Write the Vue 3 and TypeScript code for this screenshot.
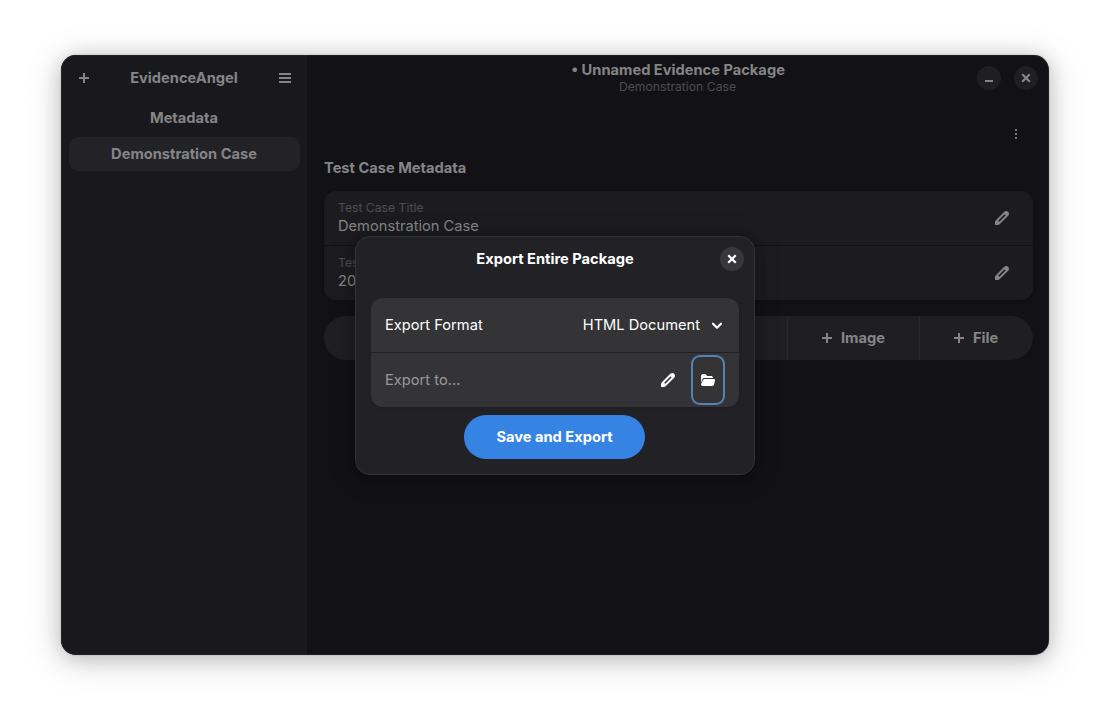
<script setup lang="ts">
interface Field {
  label: string
  value: string
}

const sections: string[] = ['Metadata', 'Demonstration Case']
const selected = 'Demonstration Case'
const fields: Field[] = [
  { label: 'Test Case Title', value: 'Demonstration Case' },
  { label: 'Test', value: '20' },
]
const evidenceActions: string[] = ['Image', 'File']
</script>

<template>
  <div class="desktop">
    <svg width="0" height="0" class="defs" aria-hidden="true">
      <symbol id="pencil" viewBox="0 0 16 16">
        <path
          fill-rule="evenodd"
          d="M12.300 1C13.700 1 15 2.300 15 3.700C15 4.600 14.700 5.200 14.200 5.700L5.800 14.100C5.200 14.700 4.600 15 3.900 15H1V12.100C1 11.400 1.300 10.800 1.900 10.200L10.300 1.800C10.800 1.300 11.400 1 12.300 1ZM10.200 4.700L4.600 10.300C3.900 11 5 12.100 5.700 11.400L11.300 5.800C12 5.100 10.900 4 10.200 4.700Z"
        />
      </symbol>
      <symbol id="plus" viewBox="0 0 16 16">
        <path d="M7 3h2v4h4v2H9v4H7V9H3V7h4z" />
      </symbol>
      <symbol id="cross" viewBox="0 0 16 16">
        <path d="M5 5l6 6M11 5l-6 6" fill="none" stroke="currentColor" stroke-width="2.200" stroke-linecap="square" />
      </symbol>
    </svg>

    <div class="window">
      <aside class="sidebar">
        <header class="side-head">
          <svg class="icon"><use href="#plus" /></svg>
          <span>EvidenceAngel</span>
          <svg class="icon" viewBox="0 0 16 16"><path d="M2 3h12v2H2zM2 7h12v2H2zM2 11h12v2H2z" /></svg>
        </header>
        <nav>
          <div v-for="s in sections" :key="s" class="nav-row" :class="{ active: s === selected }">{{ s }}</div>
        </nav>
      </aside>

      <main class="content">
        <header class="head">
          <div class="titles">
            <div class="title">• Unnamed Evidence Package</div>
            <div class="subtitle">Demonstration Case</div>
          </div>
          <div class="controls">
            <span class="round"><svg class="icon" viewBox="0 0 16 16"><path d="M4 10h8v2H4z" /></svg></span>
            <span class="round"><svg class="icon"><use href="#cross" /></svg></span>
          </div>
        </header>
        <div class="more">
          <svg class="icon" viewBox="0 0 16 16"><path d="M7 3h2v2H7zM7 7h2v2H7zM7 11h2v2H7z" /></svg>
        </div>
        <h2>Test Case Metadata</h2>
        <section class="card">
          <div v-for="f in fields" :key="f.label" class="field">
            <div>
              <div class="label">{{ f.label }}</div>
              <div class="value">{{ f.value }}</div>
            </div>
            <svg class="icon"><use href="#pencil" /></svg>
          </div>
        </section>
        <div class="actions">
          <div class="action-fill"></div>
          <div v-for="a in evidenceActions" :key="a" class="action">
            <svg class="icon"><use href="#plus" /></svg><span>{{ a }}</span>
          </div>
        </div>
      </main>

      <div class="dialog" role="dialog">
        <header class="dialog-head">
          <span>Export Entire Package</span>
          <span class="round close"><svg class="icon"><use href="#cross" /></svg></span>
        </header>
        <section class="options">
          <div class="option">
            <span>Export Format</span>
            <span class="choice">HTML Document</span>
            <svg class="icon" viewBox="0 0 16 16"><path d="M4 6.700l4 4 4-4" fill="none" stroke="currentColor" stroke-width="2.200" stroke-linecap="round" stroke-linejoin="round" /></svg>
          </div>
          <div class="option path">
            <span class="placeholder">Export to…</span>
            <svg class="icon"><use href="#pencil" /></svg>
            <span class="browse">
              <svg class="icon" viewBox="0 0 16 16">
                <path d="M1 11V4.200C1 3 1.800 2 3 2h1.800c.7 0 1 .2 1.400.7L7.300 4H11c1.200 0 2 .6 2 1.500V6H4.700C3.400 6 2.500 6.500 2.200 7.500Z" />
                <path d="M5 7h8.600c1.100 0 1.700.6 1.400 1.600l-.8 3.400c-.3 1.300-1 2-2.200 2H3c-1.200 0-2-.8-2-1.800L2.700 8.800C3.100 7.600 3.800 7 5 7Z" />
              </svg>
            </span>
          </div>
        </section>
        <button class="save">Save and Export</button>
      </div>
    </div>
  </div>
</template>

<style>
body {
  background: #fff;
}
</style>

<style scoped>
.desktop {
  box-sizing: border-box;
  width: 1110px;
  height: 722px;
  padding: 55px 61px 67px;
  overflow: hidden;
  font: 14.667px/18px Inter, sans-serif;
}
.defs {
  position: absolute;
}
.icon {
  width: 16px;
  height: 16px;
  display: block;
  flex: none;
  fill: currentColor;
}
.window {
  position: relative;
  display: flex;
  height: 600px;
  border-radius: 15px;
  overflow: hidden;
  background: #121216;
  color: #858587;
  box-shadow: 0 3px 20px 1px rgba(0, 0, 0, 0.2), 0 6px 38px 4px rgba(0, 0, 0, 0.1), 0 0 0 1px rgba(0, 0, 0, 0.05);
}
.window::after {
  content: '';
  position: absolute;
  inset: 0;
  border-radius: 15px;
  box-shadow: inset 0 0 0 1px rgba(255, 255, 255, 0.05);
  pointer-events: none;
}
.sidebar {
  width: 246px;
  background: #19191d;
  font-weight: 700;
  text-align: center;
}
.side-head {
  display: flex;
  align-items: center;
  justify-content: space-between;
  height: 46px;
  padding: 0 14px 0 15px;
}
.side-head span {
  margin-right: 1px;
}
nav {
  padding: 0 7px 0 8px;
}
.nav-row {
  height: 34px;
  line-height: 34px;
  margin-bottom: 2px;
  padding-right: 1px;
  border-radius: 9px;
}
.nav-row.active {
  background: #232327;
}
.content {
  flex: 1;
  padding: 0 16px 0 17px;
}
.head {
  position: relative;
  height: 47px;
  text-align: center;
}
.titles {
  padding: 6px 1px 0 0;
}
.title {
  font-weight: 700;
}
.subtitle {
  padding-right: 1px;
  font-size: 12.200px;
  line-height: 16px;
  color: #4d4d51;
}
.controls {
  position: absolute;
  right: -5px;
  top: 11px;
  display: flex;
  gap: 13px;
}
.round {
  display: flex;
  align-items: center;
  justify-content: center;
  width: 24px;
  height: 24px;
  border-radius: 50%;
  background: #1f1f23;
}
.more {
  display: flex;
  justify-content: flex-end;
  padding: 24px 9px 0 0;
  color: #767678;
}
h2 {
  margin: 17px 0 14px;
  font-size: inherit;
  font-weight: 700;
}
.card {
  border-radius: 12px;
  background: #1c1c20;
  box-shadow: 0 1px 3px rgba(0, 0, 0, 0.2);
}
.field {
  box-sizing: border-box;
  display: flex;
  align-items: center;
  justify-content: space-between;
  height: 54px;
  padding: 0 23px 0 14px;
}
.field + .field {
  height: 55px;
  border-top: 1px solid #121216;
}
.label {
  font-size: 12.200px;
  line-height: 16px;
  color: #4d4d51;
}
.value {
  line-height: 20px;
}
.actions {
  display: flex;
  height: 44px;
  margin-top: 16px;
  border-radius: 22px;
  background: #1f1f23;
  font-weight: 700;
}
.action-fill {
  flex: 1;
}
.action {
  box-sizing: border-box;
  display: flex;
  align-items: center;
  gap: 6px;
  width: 132px;
  padding-left: 31px;
  border-left: 1px solid #29292d;
}
.action:last-child {
  width: 114px;
}
.dialog {
  box-sizing: border-box;
  position: absolute;
  left: 294px;
  top: 181px;
  width: 400px;
  height: 239px;
  padding: 0 15px;
  border: 1px solid #333337;
  border-radius: 15px;
  background: #222226;
  color: #fff;
  box-shadow: 0 2px 8px 2px rgba(0, 0, 0, 0.13), 0 3px 20px 10px rgba(0, 0, 0, 0.09);
}
.dialog-head {
  position: relative;
  height: 61px;
  line-height: 44px;
  font-weight: 700;
  text-align: center;
}
.close {
  position: absolute;
  right: -5px;
  top: 10px;
  background: #38383c;
}
.options {
  border-radius: 12px;
  background: #343436;
  box-shadow: 0 1px 3px rgba(0, 0, 0, 0.15);
}
.option {
  box-sizing: border-box;
  display: flex;
  align-items: center;
  height: 54px;
  padding: 0 14px;
}
.choice {
  margin-left: auto;
  margin-right: 9px;
}
.path {
  height: 55px;
  border-top: 1px solid #222226;
}
.placeholder {
  flex: 1;
  color: #99999a;
}
.browse {
  box-sizing: border-box;
  display: flex;
  align-items: center;
  justify-content: center;
  width: 34px;
  height: 50px;
  margin-left: 15px;
  border: 2px solid #5681b9;
  border-radius: 9px;
}
.save {
  display: block;
  width: 181px;
  height: 44px;
  margin: 8px 0 0 93px;
  padding: 0;
  border: 0;
  border-radius: 22px;
  background: #3584e4;
  color: #fff;
  font: inherit;
  font-weight: 700;
}
</style>
